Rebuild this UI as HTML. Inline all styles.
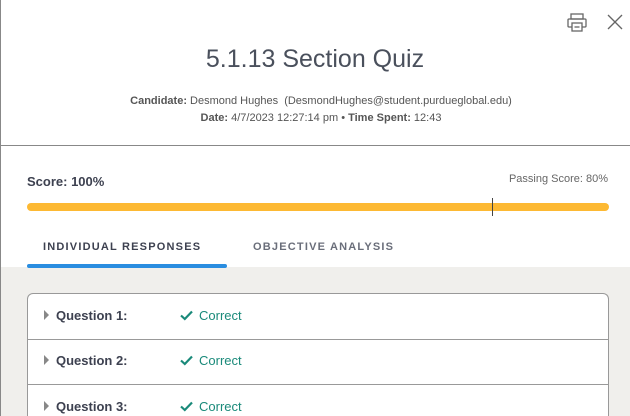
<!DOCTYPE html>
<html style="overflow:hidden;height:416px"><head><style>
*{margin:0;padding:0;box-sizing:border-box}
body{width:630px;height:416px;overflow:hidden;background:#fff;font-family:"Liberation Sans",sans-serif;position:relative;color:#3d4150}
.abs{position:absolute}
</style></head><body>
<div class="abs" style="left:0;top:0;width:1px;height:416px;background:#888"></div>
<svg class="abs" style="left:566px;top:13px" width="22" height="20" viewBox="0 0 22 20" fill="none" stroke="#666" stroke-width="1.3"><rect x="5" y="1" width="12" height="5"/><rect x="2" y="6" width="18" height="8" rx="1"/><rect x="6" y="10" width="10" height="8" fill="#fff"/><line x1="8.5" y1="14" x2="13.5" y2="14"/></svg>
<svg class="abs" style="left:607px;top:14px" width="16" height="16" viewBox="0 0 16 16" stroke="#666" stroke-width="1.3"><line x1="1" y1="1" x2="15" y2="15"/><line x1="15" y1="1" x2="1" y2="15"/></svg>
<div class="abs" style="left:0;width:630px;top:45px;text-align:center;font-size:25px;color:#4a505c">5.1.13 Section Quiz</div>
<div class="abs" style="left:6px;width:630px;top:95px;text-align:center;font-size:11px;color:#555"><b>Candidate:</b> Desmond Hughes&nbsp; (DesmondHughes@student.purdueglobal.edu)</div>
<div class="abs" style="left:6px;width:630px;top:112px;text-align:center;font-size:11px;color:#555"><b>Date:</b> 4/7/2023 12:27:14 pm • <b>Time Spent:</b> 12:43</div>
<div class="abs" style="left:0;top:145px;width:630px;height:1px;background:#888"></div>
<div class="abs" style="left:27px;top:174px;font-size:13px;font-weight:bold;color:#3d4150">Score: 100%</div>
<div class="abs" style="right:22px;top:173px;font-size:11px;color:#666">Passing Score: 80%</div>
<div class="abs" style="left:27px;top:203px;width:582px;height:8px;border-radius:4px;background:#fdb933"></div>
<div class="abs" style="left:492px;top:198px;width:1px;height:18px;background:#444"></div>
<div class="abs" style="left:43px;top:241px;font-size:11px;font-weight:bold;letter-spacing:1.2px;color:#3d4150">INDIVIDUAL RESPONSES</div>
<div class="abs" style="left:253px;top:241px;font-size:11px;font-weight:bold;letter-spacing:1.2px;color:#6a6e7a">OBJECTIVE ANALYSIS</div>
<div class="abs" style="left:1px;top:267px;width:629px;height:149px;background:#f0efec"></div>
<div class="abs" style="left:27px;top:264px;width:200px;height:4px;border-radius:2px;background:#2a8de0"></div>
<div class="abs" style="left:27px;top:293px;width:582px;height:123px;background:#fff;border:1px solid #999;border-bottom:none;border-radius:6px 6px 0 0"></div>
<div class="abs" style="left:28px;top:339px;width:580px;height:1px;background:#999"></div>
<div class="abs" style="left:28px;top:384px;width:580px;height:1px;background:#999"></div>
<div class="abs" style="left:0;top:308px;width:630px">
 <div style="position:absolute;left:44px;top:2px;width:0;height:0;border-left:5px solid #888;border-top:5px solid transparent;border-bottom:5px solid transparent"></div>
 <div style="position:absolute;left:56px;top:0;font-size:13px;font-weight:bold">Question 1:</div>
 <svg style="position:absolute;left:180px;top:2px" width="13" height="11" viewBox="0 0 13 11" fill="none" stroke="#1a8a7a" stroke-width="2.2"><path d="M1 5.5L4.8 9L12 1.5"/></svg>
 <div style="position:absolute;left:199px;top:0;font-size:13px;color:#1a8a7a">Correct</div>
</div>
<div class="abs" style="left:0;top:353px;width:630px">
 <div style="position:absolute;left:44px;top:2px;width:0;height:0;border-left:5px solid #888;border-top:5px solid transparent;border-bottom:5px solid transparent"></div>
 <div style="position:absolute;left:56px;top:0;font-size:13px;font-weight:bold">Question 2:</div>
 <svg style="position:absolute;left:180px;top:2px" width="13" height="11" viewBox="0 0 13 11" fill="none" stroke="#1a8a7a" stroke-width="2.2"><path d="M1 5.5L4.8 9L12 1.5"/></svg>
 <div style="position:absolute;left:199px;top:0;font-size:13px;color:#1a8a7a">Correct</div>
</div>
<div class="abs" style="left:0;top:399px;width:630px">
 <div style="position:absolute;left:44px;top:2px;width:0;height:0;border-left:5px solid #888;border-top:5px solid transparent;border-bottom:5px solid transparent"></div>
 <div style="position:absolute;left:56px;top:0;font-size:13px;font-weight:bold">Question 3:</div>
 <svg style="position:absolute;left:180px;top:2px" width="13" height="11" viewBox="0 0 13 11" fill="none" stroke="#1a8a7a" stroke-width="2.2"><path d="M1 5.5L4.8 9L12 1.5"/></svg>
 <div style="position:absolute;left:199px;top:0;font-size:13px;color:#1a8a7a">Correct</div>
</div>
</body></html>
